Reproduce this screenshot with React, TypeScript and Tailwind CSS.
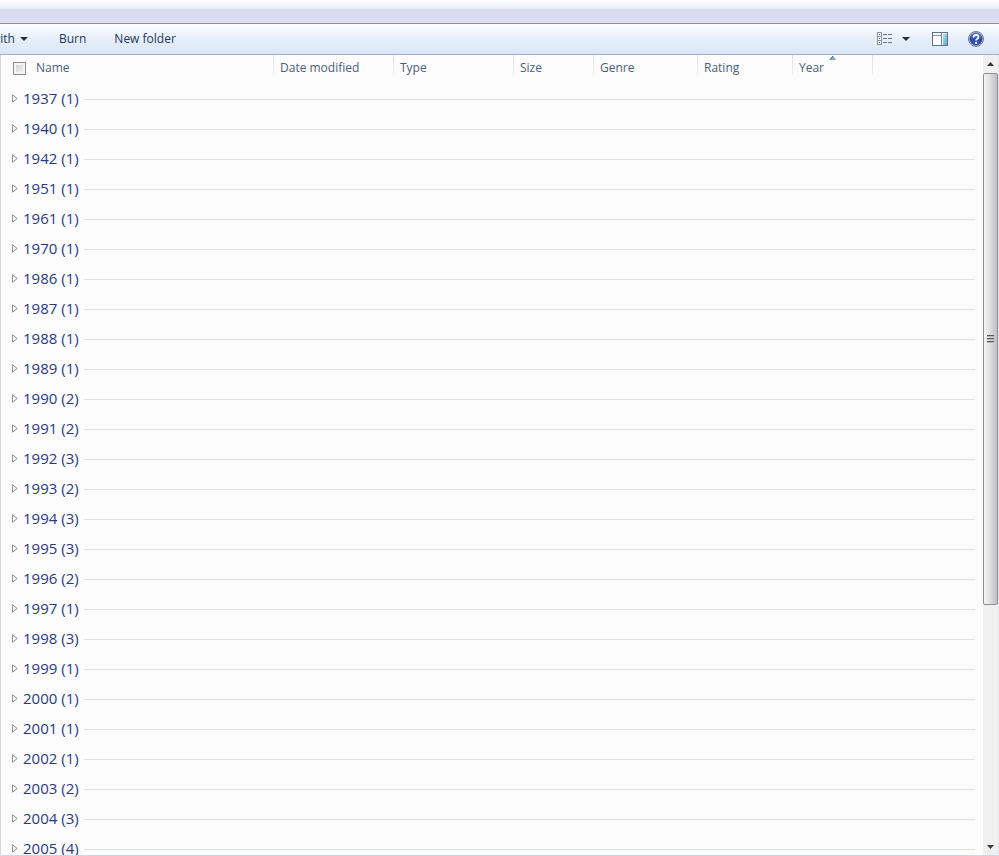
import clsx from "clsx";

const groups = [
  { year: 1937, count: 1 },
  { year: 1940, count: 1 },
  { year: 1942, count: 1 },
  { year: 1951, count: 1 },
  { year: 1961, count: 1 },
  { year: 1970, count: 1 },
  { year: 1986, count: 1 },
  { year: 1987, count: 1 },
  { year: 1988, count: 1 },
  { year: 1989, count: 1 },
  { year: 1990, count: 2 },
  { year: 1991, count: 2 },
  { year: 1992, count: 3 },
  { year: 1993, count: 2 },
  { year: 1994, count: 3 },
  { year: 1995, count: 3 },
  { year: 1996, count: 2 },
  { year: 1997, count: 1 },
  { year: 1998, count: 3 },
  { year: 1999, count: 1 },
  { year: 2000, count: 1 },
  { year: 2001, count: 1 },
  { year: 2002, count: 1 },
  { year: 2003, count: 2 },
  { year: 2004, count: 3 },
  { year: 2005, count: 4 },
];

const columns = [
  { name: "Name", width: "w-[273px]" },
  { name: "Date modified", width: "w-[120px]" },
  { name: "Type", width: "w-[120px]" },
  { name: "Size", width: "w-20" },
  { name: "Genre", width: "w-[104px]" },
  { name: "Rating", width: "w-[95px]" },
  { name: "Year", width: "w-20", sorted: true },
];

function DownArrow() {
  return (
    <svg width="8" height="4" viewBox="0 0 8 4" aria-hidden="true">
      <path d="M0 0h8L4 4z" fill="#1e2f4b" />
    </svg>
  );
}

function ViewIcon() {
  return (
    <svg width="16" height="14" viewBox="0 0 16 14" aria-hidden="true">
      {[0, 4, 8].map((y) => (
        <g key={y}>
          <rect x="0.5" y={y + 0.5} width="4" height="4" fill="#fff" stroke="#8a93a0" />
          <rect x="2" y={y + 2} width="1" height="1" fill="#4c5f78" />
          <path d={`M6 ${y + 2.5}h4M11 ${y + 2.5}h4`} stroke="#66758a" />
        </g>
      ))}
    </svg>
  );
}

function PreviewPaneIcon() {
  return (
    <svg width="16" height="14" viewBox="0 0 16 14" aria-hidden="true">
      <defs>
        <linearGradient id="pane" x1="0" y1="0" x2="1" y2="1">
          <stop offset="0" stopColor="#b9e4ee" />
          <stop offset="1" stopColor="#55aac4" />
        </linearGradient>
      </defs>
      <rect x="0.5" y="0.5" width="15" height="13" fill="#fff" stroke="#5f7288" />
      <path d="M1 3.5h9" stroke="#8695a6" />
      <rect x="10" y="1" width="5" height="12" fill="#e6f5f9" />
      <rect x="11" y="2" width="4" height="11" fill="url(#pane)" />
      <path d="M9.5 1v12" stroke="#6d8798" />
    </svg>
  );
}

function HelpIcon() {
  return (
    <svg width="16" height="16" viewBox="0 0 16 16" aria-hidden="true">
      <defs>
        <linearGradient id="help" x1="0" y1="0" x2="0" y2="1">
          <stop offset="0" stopColor="#7390d8" />
          <stop offset="0.5" stopColor="#2b4cab" />
          <stop offset="1" stopColor="#3558b8" />
        </linearGradient>
      </defs>
      <circle cx="8" cy="8" r="7.5" fill="#d3d9e8" stroke="#717b94" />
      <circle cx="8" cy="8" r="6.2" fill="url(#help)" stroke="#2a4384" strokeWidth="0.6" />
      <path d="M5.6 6.4c0-3.4 4.9-3.3 4.9-.4 0 1.7-2.4 1.7-2.4 3.6" fill="none" stroke="#fff" strokeWidth="1.8" />
      <circle cx="8.1" cy="11.9" r="1.1" fill="#fff" />
    </svg>
  );
}

function Toolbar() {
  return (
    <div className="flex h-8 shrink-0 items-center justify-between overflow-hidden border-y border-t-[#8b90a8] border-b-[#a0afc3] bg-linear-to-b from-[#fafcff] from-10% via-[#e6effa] via-50% to-[#dae6f5] pr-[15px] text-[#1e395b]">
      <div className="flex items-center">
        <button className="-ml-[9px] flex items-center gap-[5px]">
          with <DownArrow />
        </button>
        <button className="ml-[31px]">Burn</button>
        <button className="ml-7">New folder</button>
      </div>
      <div className="flex items-center">
        <button aria-label="Change your view">
          <ViewIcon />
        </button>
        <button aria-label="More options" className="ml-[9px]">
          <DownArrow />
        </button>
        <button aria-label="Preview pane" className="ml-[22px]">
          <PreviewPaneIcon />
        </button>
        <button aria-label="Help" className="ml-5">
          <HelpIcon />
        </button>
      </div>
    </div>
  );
}

function FileTable() {
  return (
    <table className="w-full table-fixed border-collapse">
      <thead>
        <tr className="h-[29px]">
          {columns.map(({ name, width, sorted }) => (
            <th key={name} className={clsx("relative p-0 text-left align-top font-normal text-[#4c607a]", width)}>
              <div className="flex h-[26px] items-center gap-[10px] pl-[6px]">
                {name === "Name" && (
                  <input
                    type="checkbox"
                    aria-label="Select all"
                    className="ml-[6px] size-[13px] appearance-none border border-[#8e8f8f] bg-linear-to-br from-[#cbcfd5] to-[#f6f6f6] shadow-[inset_0_0_0_2px_#f4f4f4]"
                  />
                )}
                <button>{name}</button>
              </div>
              {sorted && (
                <svg className="absolute top-px left-1/2 -translate-x-1/2" width="7" height="4" viewBox="0 0 7 4" aria-hidden="true">
                  <path d="M0 4h7L3.5 0z" fill="#7fb0c4" />
                  <path d="M0 4L3.5 0" stroke="#3c5e72" />
                </svg>
              )}
              <span className="absolute top-0 right-0 h-5 w-px bg-linear-to-b from-[#d5dfeb] to-[#eef2f7]" />
            </th>
          ))}
          <th className="p-0" />
        </tr>
      </thead>
      <tbody>
        {groups.map(({ year, count }) => (
          <tr key={year} className="h-[30px]">
            <td colSpan={8} className="p-0">
              <div className="flex items-center pr-2 pl-[11px]">
                <button className="flex items-center gap-[5px] pb-0.5 text-[15px] leading-5 whitespace-nowrap text-[#2b3a80]">
                  <svg width="6" height="9" viewBox="0 0 6 9" aria-hidden="true">
                    <path d="M0.5 0.8v7.4L5.2 4.5z" fill="#fff" stroke="#8c8c8c" />
                  </svg>
                  {year} ({count})
                </button>
                <span className="ml-[5px] h-px flex-1 bg-[#e0e2e4]" />
              </div>
            </td>
          </tr>
        ))}
      </tbody>
    </table>
  );
}

function ScrollBar() {
  return (
    <div className="flex w-4 shrink-0 flex-col border-r border-[#e6e8ee] bg-[#f0f0f0]">
      <button aria-label="Scroll up" className="flex h-[18px] shrink-0 items-center justify-center">
        <svg width="7" height="4" viewBox="0 0 7 4" aria-hidden="true">
          <path d="M0 4h7L3.5 0z" fill="#3a3a3a" />
        </svg>
      </button>
      <div className="min-h-0 flex-1">
        <div className="flex h-[69.6%] flex-col items-center justify-center gap-px rounded-xs border border-[#8f8f8f] bg-linear-to-r from-[#f5f5f5] via-[#dcdcde] to-[#c0c0c4]">
          {[0, 1, 2].map((i) => (
            <span key={i} className="h-0.5 w-[7px] border-t border-[#555] bg-[#b8b8b8]" />
          ))}
        </div>
      </div>
      <button aria-label="Scroll down" className="flex h-[17px] shrink-0 items-center justify-center">
        <svg width="7" height="4" viewBox="0 0 7 4" aria-hidden="true">
          <path d="M0 0h7L3.5 4z" fill="#3a3a3a" />
        </svg>
      </button>
    </div>
  );
}

export default function App() {
  return (
    <div className="flex h-screen flex-col overflow-hidden bg-[#fcfcfc] font-['Open_Sans','Noto_Sans',sans-serif] text-[12px] leading-4">
      <div className="flex h-[23px] shrink-0 flex-col">
        <div className="h-[9px] bg-linear-to-b from-white to-[#e8ecf6]" />
        <div className="flex-1 bg-linear-to-b from-[#d5daed] to-[#dfe1f2]" />
      </div>
      <Toolbar />
      <div className="flex min-h-0 flex-1 border-b border-l border-b-[#d2d6e2] border-l-[#d5dbe6]">
        <div className="min-w-0 flex-1 overflow-hidden">
          <FileTable />
        </div>
        <ScrollBar />
      </div>
    </div>
  );
}
